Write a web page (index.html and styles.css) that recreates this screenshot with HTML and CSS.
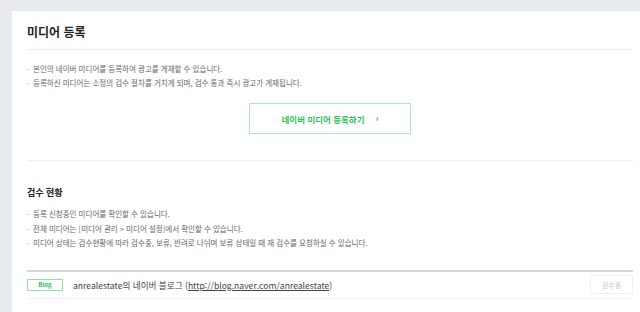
FILE: index.html
```html
<!DOCTYPE html>
<html lang="ko">
<head>
<meta charset="utf-8">
<link rel="stylesheet" href="styles.css">
</head>
<body>
<div class="card">
  <div class="head"><h1 class="title">미디어 등록</h1></div>
  <ul class="notes">
    <li>본인의 네이버 미디어를 등록하여 광고를 게재할 수 있습니다.</li>
    <li>등록하신 미디어는 소정의 검수 절차를 거치게 되며, 검수 통과 즉시 광고가 게재됩니다.</li>
  </ul>
  <div class="btn-wrap">
    <a class="reg-btn">네이버 미디어 등록하기 <span class="arrow">›</span></a>
  </div>
  <div class="section">
    <h2 class="sub">검수 현황</h2>
    <ul class="notes notes2">
      <li>등록 신청중인 미디어를 확인할 수 있습니다.</li>
      <li>전체 미디어는 [미디어 관리 &gt; 미디어 설정]에서 확인할 수 있습니다.</li>
      <li>미디어 상태는 검수현황에 따라 검수중, 보류, 반려로 나뉘며 보류 상태일 때 재 검수를 요청하실 수 있습니다.</li>
    </ul>
    <div class="row">
      <span class="badge">Blog</span>
      <span class="name">anrealestate의 네이버 블로그 (<u>http://blog.naver.com/anrealestate</u>)</span>
      <span class="status">검수중</span>
    </div>
  </div>
</div>
</body>
</html>
```
FILE: styles.css
```css
html, body { margin: 0; padding: 0; }
body {
  background: #e8ebee;
  font-family: "Noto Sans CJK KR", "Noto Sans", sans-serif;
  padding: 11px 0 0 12px;
  height: 312px;
  box-sizing: border-box;
  overflow: hidden;
}
.card {
  background: #fff;
  padding: 0 7px 0 15px;
  height: 301px;
  overflow: hidden;
}
.head {
  height: 38px;
  border-bottom: 1px solid #ececec;
  display: flex;
  align-items: center;
}
.title {
  margin: 0;
  font-size: 12px;
  font-weight: 700;
  color: #222;
  line-height: 20px;
  padding-top: 3px;
}
.notes {
  list-style: none;
  margin: 0;
  padding: 12px 0 0 0;
}
.notes li {
  font-size: 7.5px;
  line-height: 14px;
  color: #666;
  padding-left: 6px;
  position: relative;
}
.notes li::before {
  content: "·";
  position: absolute;
  left: 0;
  color: #999;
}
.btn-wrap {
  display: flex;
  justify-content: center;
  padding: 13px 0 26px;
  border-bottom: 1px solid #f0f0f0;
}
.reg-btn {
  width: 162px;
  height: 31px;
  box-sizing: border-box;
  border: 1.5px solid #a9ecbd;
  display: flex;
  align-items: center;
  justify-content: center;
  gap: 11px;
  color: #2fbf5a;
  font-size: 8.5px;
  font-weight: 700;
}
.arrow { font-size: 9px; font-weight: 700; }
.section { padding-top: 22px; }
.sub {
  margin: 0;
  font-size: 9px;
  font-weight: 700;
  color: #222;
  line-height: 20px;
}
.notes2 { padding-top: 4px; }
.notes2 li { line-height: 14.5px; }
.row {
  margin-top: 19px;
  border-top: 2px solid #d2d6da;
  border-bottom: 1px solid #f0f0f0;
  height: 26px;
  display: flex;
  align-items: center;
}
.badge {
  width: 36px;
  height: 12px;
  box-sizing: border-box;
  border: 1px solid #8fe3a6;
  color: #2fbf5a;
  font-size: 6px;
  font-weight: 700;
  display: flex;
  align-items: center;
  justify-content: center;
}
.name {
  margin-left: 10px;
  font-size: 8.6px;
  color: #444;
  flex: 1;
}
.status {
  width: 43px;
  height: 19px;
  box-sizing: border-box;
  border: 1px solid #f0f0f0;
  color: #c8c8c8;
  font-size: 7px;
  display: flex;
  align-items: center;
  justify-content: center;
}
```
